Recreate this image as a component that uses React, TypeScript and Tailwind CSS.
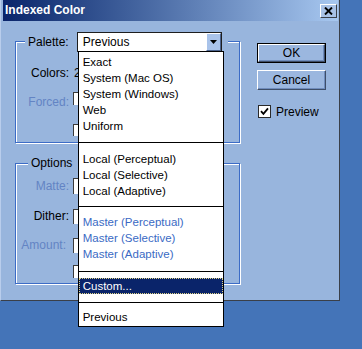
import React from 'react';

const frame = 'relative border border-[#3c6cc6] shadow-[inset_1px_1px_0_#ffffff,1px_1px_0_#ffffff]';
const label = 'w-[57px] shrink-0 text-right pr-[4px] leading-none';
const dim = 'text-[#6384c4]';
const peek = 'shrink-0 w-[110px] bg-white border-l border-t border-[#3a3a3a]';

type Item = { text: string; tone?: 'master' | 'active' };

const groups: { items: Item[]; gap: string }[] = [
  { gap: 'pt-[2px]', items: [{ text: 'Exact' }, { text: 'System (Mac OS)' }, { text: 'System (Windows)' }, { text: 'Web' }, { text: 'Uniform' }] },
  { gap: '', items: [{ text: 'Local (Perceptual)' }, { text: 'Local (Selective)' }, { text: 'Local (Adaptive)' }] },
  { gap: '', items: [{ text: 'Master (Perceptual)', tone: 'master' }, { text: 'Master (Selective)', tone: 'master' }, { text: 'Master (Adaptive)', tone: 'master' }] },
  { gap: '', items: [{ text: 'Custom...', tone: 'active' }] },
  { gap: '', items: [{ text: 'Previous' }] },
];

// separator spacing (above / below the 1px rule), tuned per section
const seps = ['mt-[8px] mb-[8px]', 'mt-[7px] mb-[7px]', 'mt-[9px] mb-[6px]', 'mt-[8px] mb-[6px]'];

function PaletteList() {
  return (
    <div className="absolute left-0 top-full z-10 w-[146px] bg-white border border-black pb-[1px] text-[11.5px]">
      {groups.map((g, gi) => (
        <div key={gi}>
          {gi > 0 && <div className={`h-px bg-black ${seps[gi - 1]}`} />}
          <div className={g.gap}>
            {g.items.map(it =>
              it.tone === 'active' ? (
                <div key={it.text} className="h-[16px] leading-[14px] pl-[3px] bg-[#0a246a] text-white border border-dotted border-[#e0d488] whitespace-nowrap">
                  {it.text}
                </div>
              ) : (
                <div
                  key={it.text}
                  className={`h-[16px] leading-[16px] pl-[4px] whitespace-nowrap ${it.tone === 'master' ? 'text-[#3a6ac4]' : 'text-black'}`}
                >
                  {it.text}
                </div>
              )
            )}
          </div>
        </div>
      ))}
    </div>
  );
}

function Check({ on }: { on?: boolean }) {
  return (
    <div className="w-[13px] h-[13px] shrink-0 bg-white border border-[#2a2a2a] flex items-center justify-center">
      {on && (
        <svg width="9" height="9" viewBox="0 0 9 9">
          <path d="M1 4.2 L3.4 6.8 L8 1.4" fill="none" stroke="#000" strokeWidth="1.8" />
        </svg>
      )}
    </div>
  );
}

function Button({ children, primary }: { children: React.ReactNode; primary?: boolean }) {
  return (
    <div className={`w-[69px] h-[20px] ${primary ? 'border border-black' : ''}`}>
      <div className="w-full h-full bg-[#9bb7df] border-t border-l border-white border-r border-b border-r-[#3e4e68] border-b-[#3e4e68] shadow-[inset_-1px_-1px_0_#6f8cbc] flex items-center justify-center text-[12px] leading-none text-black">
        {children}
      </div>
    </div>
  );
}

export default function App() {
  return (
    <div className="w-[362px] h-[349px] bg-[#4474b8] overflow-hidden font-['Liberation_Sans',Arial,sans-serif] text-[12px] text-black">
      <div className="w-[340px] h-[301px] bg-[#98b5dd] border-l border-l-[#b9cdec] border-r border-b border-r-[#3a3f48] border-b-[#3a3f48] pl-[2px] pr-[1px]">
        {/* title bar */}
        <div className="h-[21px] flex items-start justify-between bg-gradient-to-r from-[#0a246a] to-[#a8c8f0]">
          <span className="pl-[2px] pt-[4px] text-[12px] font-bold text-white leading-[13px]">Indexed Color</span>
          <div className="mt-[4px] mr-[1px] w-[17px] h-[14px] bg-[#a9c2e6] border-t border-l border-white border-r border-b border-r-[#3a3f48] border-b-[#3a3f48] flex items-center justify-center">
            <svg width="9" height="8" viewBox="0 0 9 8">
              <path d="M1 0.5 L8 7.5 M8 0.5 L1 7.5" stroke="#000" strokeWidth="1.9" />
            </svg>
          </div>
        </div>

        <div className="flex">
          {/* left column */}
          <div className="ml-[12px] mt-[20px] w-[225px] shrink-0">
            <div className={`${frame} h-[102px]`}>
              <div className="-mt-[10px] h-[20px] flex items-center">
                <span className="ml-[9px] pl-[3px] pr-[8px] bg-[#98b5dd] leading-[20px]">Palette:</span>
                <div className="relative w-[145px] h-[20px] bg-white border border-[#1e1e1e] flex items-center">
                  <span className="pl-[5px] flex-1 leading-none">Previous</span>
                  <div className="w-[15px] h-[18px] bg-[#a9c3ea] border-t border-l border-white border-r border-b border-r-[#4a628c] border-b-[#4a628c] flex items-center justify-center">
                    <svg width="7" height="4" viewBox="0 0 7 4">
                      <path d="M0 0 H7 L3.5 4 Z" fill="#000" />
                    </svg>
                  </div>
                  <PaletteList />
                </div>
                <span className="w-[6px] h-[4px] bg-[#98b5dd]" />
              </div>

              <div className="mt-[11px] h-[20px] flex items-center">
                <span className={label}>Colors:</span>
                {/* value field sits under the open list; only its first digit shows */}
                <span className="pl-[1px] w-[5px] overflow-hidden leading-none">2</span>
              </div>

              <div className="mt-[9px] h-[20px] flex items-center">
                <span className={`${label} ${dim}`}>Forced:</span>
                <div className={`${peek} self-start h-[13px]`} />
              </div>

              <div className="mt-[11px] h-[13px] flex items-center">
                <span className={label} />
                <div className="w-[13px] h-[12px] bg-white border-l border-t border-[#3a3a3a]" />
              </div>
            </div>

            <div className={`${frame} mt-[20px] h-[121px]`}>
              <div className="-mt-[9px] h-[16px] flex items-center">
                <span className="ml-[12px] px-[3px] pr-[6px] bg-[#98b5dd] leading-[16px]">Options</span>
              </div>

              <div className="mt-[7px] h-[16px] flex items-center">
                <span className={`${label} ${dim}`}>Matte:</span>
                <div className={`${peek} h-[16px]`} />
              </div>

              <div className="mt-[14px] h-[16px] flex items-center">
                <span className={label}>Dither:</span>
                <div className={`${peek} h-[15px]`} />
              </div>

              <div className="mt-[13px] h-[16px] flex items-center">
                <span className={`${label} ${dim} pr-[7px]`}>Amount:</span>
                <div className={`${peek} h-[15px]`} />
              </div>

              <div className="mt-[12px] h-[13px] flex items-center">
                <span className={label} />
                <div className="w-[13px] h-[13px] bg-white border-l border-t border-[#3a3a3a]" />
              </div>
            </div>
          </div>

          {/* right column */}
          <div className="ml-[17px] mt-[22px] flex flex-col">
            <Button primary>OK</Button>
            <div className="mt-[7px]">
              <Button>Cancel</Button>
            </div>
            <div className="mt-[15px] ml-[1px] flex items-center">
              <Check on />
              <span className="ml-[5px] leading-none">Preview</span>
            </div>
          </div>
        </div>
      </div>
    </div>
  );
}
